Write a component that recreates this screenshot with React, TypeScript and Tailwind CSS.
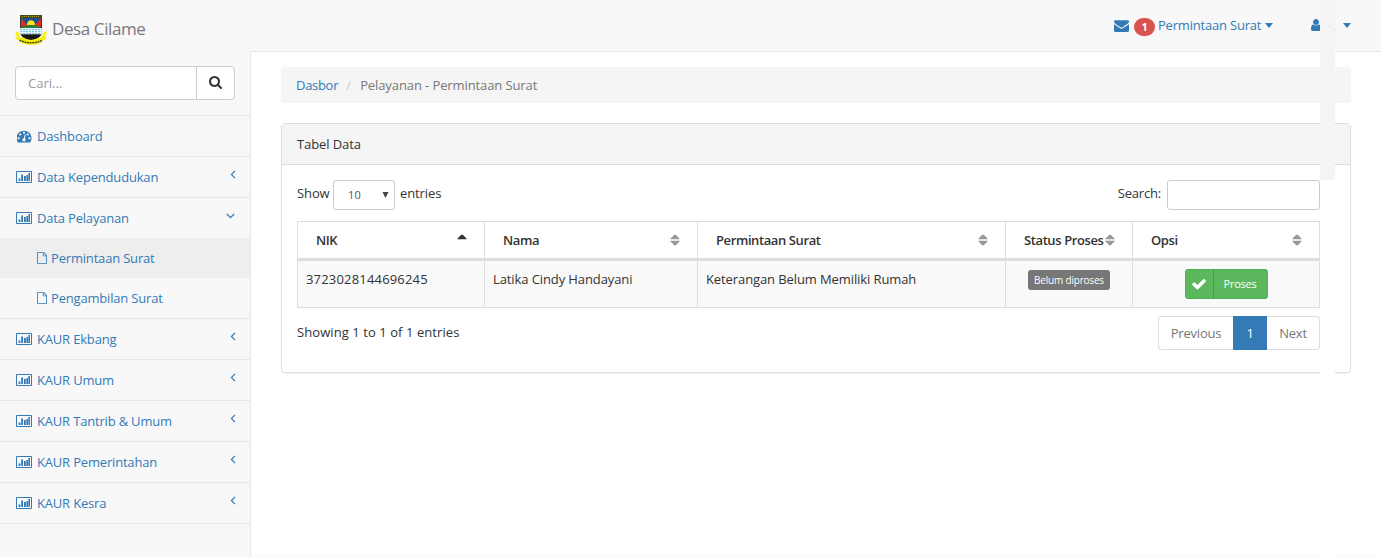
import React from "react";

type IconProps = { d: string; className?: string };

function Glyph({ d, className = "" }: IconProps) {
  return (
    <svg viewBox="0 0 1792 1792" fill="currentColor" className={`shrink-0 ${className}`}>
      <path d={d} />
    </svg>
  );
}

const SEARCH =
  "M1152 704q0-185-131.5-316.5t-316.5-131.5-316.5 131.5-131.5 316.5 131.5 316.5 316.5 131.5 316.5-131.5 131.5-316.5zm512 832q0 52-38 90t-90 38q-54 0-90-38l-343-342q-179 124-399 124-143 0-273.5-55.5t-225-150-150-225-55.5-273.5 55.5-273.5 150-225 225-150 273.5-55.5 273.5 55.5 225 150 150 225 55.5 273.5q0 220-124 399l343 343q37 37 37 90z";
const FILE =
  "M1596 380q28 28 48 76t20 88v1152q0 40-28 68t-68 28h-1344q-40 0-68-28t-28-68v-1600q0-40 28-68t68-28h896q40 0 88 20t76 48zm-444-244v376h376q-10-29-22-41l-313-313q-12-12-41-22zm384 1528v-1024h-416q-40 0-68-28t-28-68v-416h-768v1536h1280z";
const ENVELOPE =
  "M1792 710v794q0 66-47 113t-113 47h-1472q-66 0-113-47t-47-113v-794q44 49 101 87 362 246 497 345 57 42 92.5 65.5t94.5 48 110 24.5h2q51 0 110-24.5t94.5-48 92.5-65.5q170-123 498-345 57-39 100-87zm0-294q0 79-49 151t-122 123q-376 261-468 325-10 7-42.5 31t-54 38.5-52 32.5-57.5 27-50 9h-2q-23 0-50-9t-57.5-27-52-32.5-54-38.5-42.5-31q-91-64-262-182.5t-205-142.5q-62-42-117-115.5t-55-136.5q0-78 41.5-130t118.5-52h1472q65 0 112.5 47t47.5 113z";
const USER =
  "M1536 1399q0 109-62.5 187t-150.5 78h-854q-88 0-150.5-78t-62.5-187q0-85 8.5-160.5t31.5-152 58.5-131 94-89 134.5-34.5q131 128 313 128t313-128q76 0 134.5 34.5t94 89 58.5 131 31.5 152 8.5 160.5zm-256-887q0 159-112.5 271.5t-271.5 112.5-271.5-112.5-112.5-271.5 112.5-271.5 271.5-112.5 271.5 112.5 112.5 271.5z";
const CHECK =
  "M1671 566q0 40-28 68l-724 724-136 136q-28 28-68 28t-68-28l-136-136-362-362q-28-28-28-68t28-68l136-136q28-28 68-28t68 28l294 295 656-657q28-28 68-28t68 28l136 136q28 28 28 68z";
const GAUGE =
  "M384 1152q0-53-37.5-90.5t-90.5-37.5-90.5 37.5-37.5 90.5 37.5 90.5 90.5 37.5 90.5-37.5 37.5-90.5zm192-448q0-53-37.5-90.5t-90.5-37.5-90.5 37.5-37.5 90.5 37.5 90.5 90.5 37.5 90.5-37.5 37.5-90.5zm428 481l101-382q6-26-7.5-48.5t-38.5-29.5-48 6.5-30 39.5l-101 382q-60 5-107 43.5t-63 98.5q-20 77 20 146t117 89 146-20 89-117q16-60-6-117t-72-91zm660-33q0-53-37.5-90.5t-90.5-37.5-90.5 37.5-37.5 90.5 37.5 90.5 90.5 37.5 90.5-37.5 37.5-90.5zm-640-640q0-53-37.5-90.5t-90.5-37.5-90.5 37.5-37.5 90.5 37.5 90.5 90.5 37.5 90.5-37.5 37.5-90.5zm448 192q0-53-37.5-90.5t-90.5-37.5-90.5 37.5-37.5 90.5 37.5 90.5 90.5 37.5 90.5-37.5 37.5-90.5zm320 448q0 261-141 483-19 29-54 29h-1402q-35 0-54-29-141-221-141-483 0-182 71-348t191-286 286-191 348-71 348 71 286 191 191 286 71 348z";

function ChartIcon() {
  return (
    <svg viewBox="0 0 16 12" className="h-3 w-4 shrink-0" fill="currentColor">
      <path fillRule="evenodd" d="M1 0h14a1 1 0 0 1 1 1v10a1 1 0 0 1-1 1H1a1 1 0 0 1-1-1V1a1 1 0 0 1 1-1zM1 1v10h14V1z" />
      <path d="M2.6 7.500h1.800V10H2.6zM5.200 3.500H7V10H5.200zM8 5h1.800V10H8zM10.400 4h1.600V10h-1.600zM12.400 2H14V10h-1.600z" />
    </svg>
  );
}

function Caret() {
  return (
    <svg viewBox="0 0 8 4" className="h-[5px] w-2 shrink-0" fill="currentColor" preserveAspectRatio="none">
      <path d="M0 0h8L4 4z" />
    </svg>
  );
}

function Crest() {
  return (
    <svg viewBox="0 0 32 30" className="h-[30px] w-8 shrink-0">
      <path d="M.5 16l3 1.500 2 5h21l2-5 3-1.500 0 3-1.500 2 1.500 3-3.500 1-2 3q-10 4-20 0l-2-3-3.500-1L2 21 .5 19z" fill="#f8ee10" />
      <path d="M5 0h22v17q0 6-11 8Q5 23 5 17z" fill="#333" />
      <path d="M6 3h20v9H6z" fill="#1d4f94" />
      <path d="M6 3l8 9H6zM26 3l-8 9h8z" fill="#d9301f" />
      <path d="M5 0h22v3H5z" fill="#4b4a14" />
      <path d="M7 1.500h18" stroke="#a59b1f" strokeWidth="1" strokeDasharray="1 1" />
      <path d="M12 10a4 4.800 0 0 1 8 0z" fill="#fde714" />
      <path d="M6 13q5-3.500 10-2.800 5-.700 10 2.800z" fill="#23823c" />
      <path d="M5 13h22v6.500H5z" fill="#e8f6fc" />
      <path d="M5 14.500h22M5 16.500h22M5 18.500h22" stroke="#6dc0e6" strokeWidth=".9" strokeDasharray="2 1" />
      <path d="M6 19.500h20l-2 2.500q-8 5-16 0z" fill="#171717" />
      <path d="M4.500 25.300q11.500 5 23 0" stroke="#4d490d" strokeWidth="1.500" strokeDasharray="2 .6" fill="none" />
    </svg>
  );
}

function Angle({ open = false }: { open?: boolean }) {
  return open ? (
    <svg viewBox="0 0 9 6" className="mt-[3px] h-1.5 w-[9px]" fill="none" stroke="currentColor" strokeWidth="1.2">
      <path d="M.8 1l3.700 3.600L8.200 1" />
    </svg>
  ) : (
    <svg viewBox="0 0 6 9" className="mt-px h-[9px] w-1.5" fill="none" stroke="currentColor" strokeWidth="1.2">
      <path d="M5 .8L1.400 4.500 5 8.200" />
    </svg>
  );
}

function MenuItem({ label, open, gauge }: { label: string; open?: boolean; gauge?: boolean }) {
  return (
    <li className={`flex items-start px-4 pt-2.5 ${open ? "h-10" : "h-[41px] border-b border-[#e7e7e7]"}`}>
      <span className="flex h-5 items-center pb-px">
        {gauge ? <Glyph d={GAUGE} className="size-4 p-[0.5px]" /> : <ChartIcon />}
      </span>
      <span className="ml-[5px]">{label}</span>
      {!gauge && (
        <span className={`ml-auto pt-0.5 ${open ? "-mr-px" : "-mr-0.5"}`}>
          <Angle open={open} />
        </span>
      )}
    </li>
  );
}

function SubItem({ label, active }: { label: string; active?: boolean }) {
  return (
    <li className={`flex h-10 items-center pl-[37px] ${active ? "bg-[#eeeeee]" : ""}`}>
      <svg viewBox="128 0 1536 1792" fill="currentColor" className="-mt-px h-3 w-[10px]">
        <path d={FILE} />
      </svg>
      <span className="ml-1">{label}</span>
    </li>
  );
}

function Sort({ asc }: { asc?: boolean }) {
  return (
    <svg viewBox="0 0 10 12" className={`h-3 w-2.5 shrink-0 ${asc ? "text-[#333333]" : "text-[#999999]"}`} fill="currentColor">
      <path d="M.5 5.300V4.500L4 1q1-1 2 0l3.500 3.500v.8z" />
      {!asc && <path d="M.5 6.700v.8L4 11q1 1 2 0l3.500-3.500v-.8z" />}
    </svg>
  );
}

function Th({ label, w, asc }: { label: string; w: string; asc?: boolean }) {
  return (
    <div className={`flex items-center justify-between border-r border-[#dddddd] pl-[18px] pr-[17px] ${w}`}>
      <span className="text-[13px] font-semibold tracking-[-0.4px] whitespace-nowrap">{label}</span>
      <Sort asc={asc} />
    </div>
  );
}

export default function App() {
  return (
    <div className="relative h-[557px] w-[1381px] overflow-hidden bg-[#f8f8f8] font-['Open_Sans',sans-serif] text-[13px] leading-5 tracking-[-0.1px] text-[#333333]">
      <header className="flex h-[52px]">
        <div className="flex w-[250px] items-start pl-[15px] pt-[15px]">
          <Crest />
          <span className="ml-[5px] mt-1 text-[17px] tracking-[-0.4px] text-[#777777]">Desa Cilame</span>
        </div>
        <div className="flex grow justify-end border-b border-[#e7e7e7] pt-[15px] text-[#337ab7]">
          <Glyph d={ENVELOPE} className="mt-[3px] size-[15px]" />
          <span className="ml-[5px] mt-[3px] flex h-[18px] w-[21px] items-center justify-center rounded-[10px] bg-[#d9534f] text-[11px] font-bold text-white">1</span>
          <span className="ml-[3px] w-[104px] whitespace-nowrap tracking-[-0.2px]">Permintaan Surat</span>
          <span className="ml-[3px] mt-2"><Caret /></span>
          <Glyph d={USER} className="ml-[36px] mt-[3px] size-3.5" />
          <span className="flex w-[13px] justify-end">,</span>
          <span className="ml-[7px] mr-[30px] mt-2"><Caret /></span>
        </div>
      </header>

      <div className="flex h-[504px]">
        <aside className="w-[250px] tracking-[-0.18px] text-[#337ab7]">
          <div className="flex h-16 border-b border-[#e7e7e7] px-[15px] pt-3.5">
            <div className="flex h-[34px] w-[182px] items-center rounded-l border border-[#cccccc] bg-white px-3 tracking-normal text-[#999999]">Cari...</div>
            <div className="-ml-px flex h-[34px] w-[39px] items-center justify-center rounded-r border border-[#cccccc] bg-white text-[#333333]">
              <Glyph d={SEARCH} className="size-3.5" />
            </div>
          </div>
          <ul>
            <MenuItem label="Dashboard" gauge />
            <MenuItem label="Data Kependudukan" />
            <MenuItem label="Data Pelayanan" open />
            <li>
              <ul className="border-b border-[#e7e7e7]">
                <SubItem label="Permintaan Surat" active />
                <SubItem label="Pengambilan Surat" />
              </ul>
            </li>
            <MenuItem label="KAUR Ekbang" />
            <MenuItem label="KAUR Umum" />
            <MenuItem label="KAUR Tantrib & Umum" />
            <MenuItem label="KAUR Pemerintahan" />
            <MenuItem label="KAUR Kesra" />
          </ul>
        </aside>

        <main className="grow border-l border-[#e7e7e7] bg-white px-[30px] pt-[15px]">
          <nav className="flex h-9 items-center rounded bg-[#f5f5f5] px-[15px] text-[#777777]">
            <span className="tracking-[-0.3px] text-[#337ab7]">Dasbor</span>
            <span className="w-[22px] pr-px text-center text-[#cccccc]">/</span>
            <span>Pelayanan - Permintaan Surat</span>
          </nav>

          <section className="mt-5 h-[250px] rounded border border-[#dddddd] shadow-[0_1px_1px_rgba(0,0,0,0.05)]">
            <h2 className="flex h-[41px] items-center rounded-t-[3px] border-b border-[#dddddd] bg-[#f5f5f5] px-[15px]">Tabel Data</h2>
            <div className="w-[1038px] pl-[15px] pt-[15px]">
              <div className="flex h-[41px] items-start">
                <span className="mt-[3px] w-9">Show</span>
                <span className="flex h-[30px] w-[62px] items-center justify-between rounded-[3px] border border-[#cccccc] pl-[14px] pr-[5px] text-[11px] tracking-[0.2px] text-[#555555]">
                  10
                  <svg viewBox="0 0 7 6" className="h-1.5 w-[7px]" fill="#444444"><path d="M.5 0h6l-3 6z" /></svg>
                </span>
                <span className="ml-[5px] mt-[3px]">entries</span>
                <span className="ml-auto mr-[6px] mt-[3px] tracking-[-0.2px]">Search:</span>
                <span className="h-[30px] w-[153px] rounded-[3px] border border-[#cccccc]" />
              </div>

              <div className="h-[87px] border-t border-b border-l border-[#dddddd]">
                <div className="flex h-[39px] border-b-[3px] border-[#dddddd]">
                  <Th label="NIK" w="w-[187px]" asc />
                  <Th label="Nama" w="w-[213px]" />
                  <Th label="Permintaan Surat" w="w-[308px]" />
                  <Th label="Status Proses" w="w-[127px]" />
                  <Th label="Opsi" w="w-[187px]" />
                </div>
                <div className="flex h-[46px] items-stretch bg-[#f9f9f9] *:border-r *:border-[#dddddd] *:pt-2">
                  <div className="w-[187px] pl-2 tracking-[0.18px]">3723028144696245</div>
                  <div className="w-[213px] pl-2">Latika Cindy Handayani</div>
                  <div className="w-[308px] pl-2">Keterangan Belum Memiliki Rumah</div>
                  <div className="flex w-[127px] justify-center">
                    <span className="mt-px flex h-5 w-[82px] items-center justify-center rounded-[3px] bg-[#777777] text-[10px] tracking-[-0.2px] text-white">Belum diproses</span>
                  </div>
                  <div className="flex w-[187px] justify-center">
                    <span className="flex h-[30px] w-[83px] rounded-[3px] border border-[#4cae4c] bg-[#5cb85c] text-[11px] tracking-[-0.25px] text-white">
                      <span className="flex w-7 items-center justify-center border-r border-[#449d44]">
                        <Glyph d={CHECK} className="size-4" />
                      </span>
                      <span className="flex grow items-center justify-center">Proses</span>
                    </span>
                  </div>
                </div>
              </div>

              <div className="flex justify-between pt-2">
                <span className="mt-1.5 tracking-[0.07px]">Showing 1 to 1 of 1 entries</span>
                <div className="flex h-[34px] tracking-[-0.2px] text-[#777777]">
                  <span className="flex w-[75px] items-center justify-center rounded-l border border-r-0 border-[#dddddd]">Previous</span>
                  <span className="flex w-[34px] items-center justify-center bg-[#337ab7] text-white">1</span>
                  <span className="flex w-[53px] items-center justify-center rounded-r border border-l-0 border-[#dddddd]">Next</span>
                </div>
              </div>
            </div>
          </section>
        </main>
      </div>

      <div className="absolute left-[1320px] top-0 h-full w-[15px] bg-white">
        <div className="h-[180px] bg-[#f4f4f4]" />
      </div>
    </div>
  );
}
